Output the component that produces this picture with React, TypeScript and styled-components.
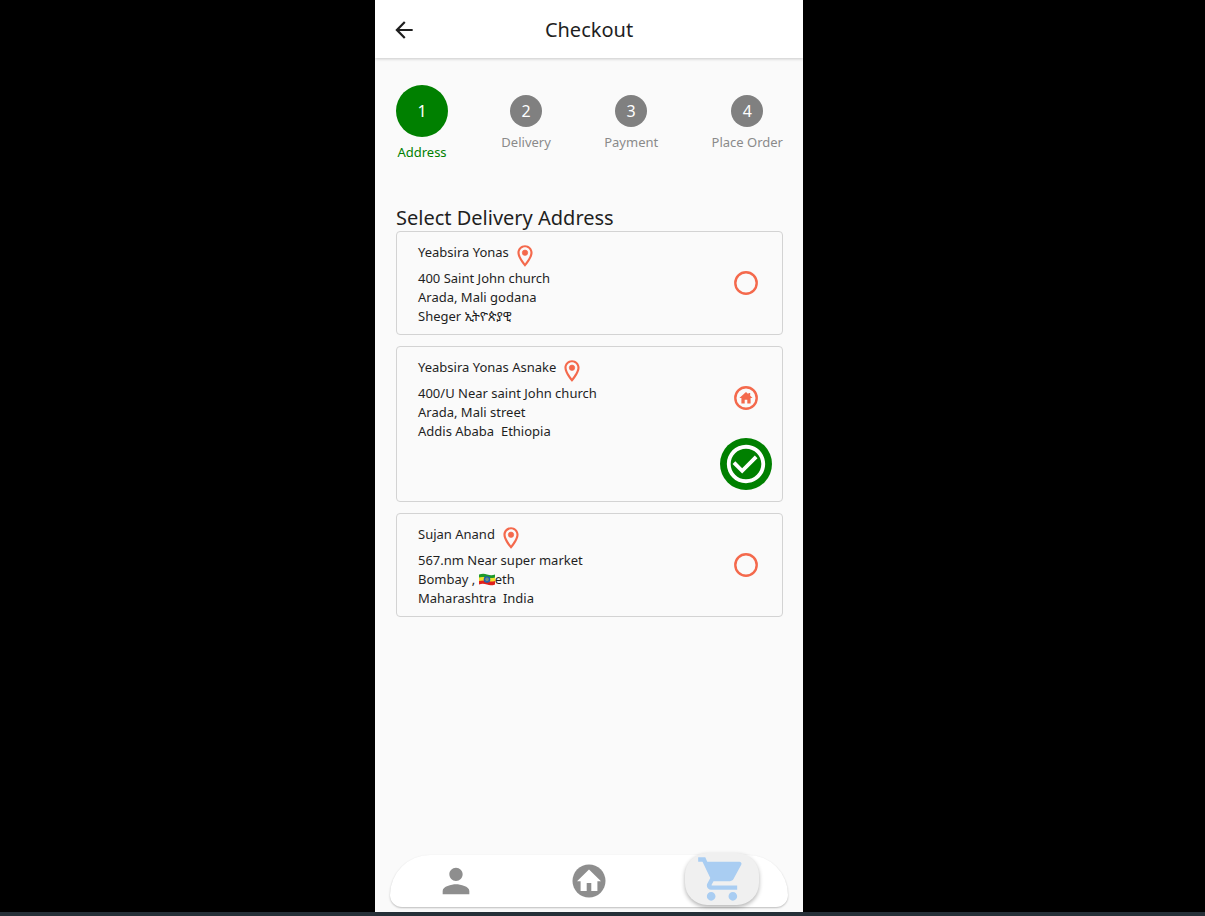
import React from "react";
import styled, { createGlobalStyle } from "styled-components";
import {
  MdArrowBack,
  MdCheckCircleOutline,
  MdOutlineLocationOn,
  MdPerson,
  MdShoppingCart,
} from "react-icons/md";

const GlobalStyle = createGlobalStyle`
  *, *::before, *::after { box-sizing: border-box; }
  body {
    margin: 0;
    background: #000;
    color: #1f1f1f;
    font-family: "Noto Sans", "Noto Sans Ethiopic", sans-serif;
  }
  button, input { font: inherit; margin: 0; padding: 0; border: 0; background: none; cursor: pointer; }
  svg { display: block; flex: none; }
`;

const Page = styled.div`
  min-height: 100vh;
  display: flex;
  justify-content: center;
  padding-right: 27px;
  border-bottom: 4px solid #263038;
`;

const Screen = styled.div`
  width: 100%;
  max-width: 428px;
  display: flex;
  flex-direction: column;
  background: #fafafa;
`;

const Header = styled.header`
  display: grid;
  grid-template-columns: 26px 1fr 26px;
  align-items: center;
  height: 58px;
  padding: 2px 16px 0;
  background: #fff;
  box-shadow: 0 1px 3px rgba(0, 0, 0, 0.2);
`;

const IconButton = styled.button`
  display: flex;
  align-items: center;
  justify-content: center;
  color: #1f1f1f;
`;

const Title = styled.h1`
  margin: 0;
  text-align: center;
  font-size: 20px;
  font-weight: 400;
  line-height: 28px;
`;

const Main = styled.main`
  flex: 1;
  padding: 27px 20px 24px 21px;
`;

const Steps = styled.ol`
  display: flex;
  align-items: center;
  justify-content: space-between;
  margin: 0 0 42px;
  padding: 0;
  list-style: none;
`;

const Step = styled.li<{ $active?: boolean }>`
  display: flex;
  flex-direction: column;
  align-items: center;
  gap: 6px;
  font-size: 13px;
  line-height: 19px;
  color: ${(p) => (p.$active ? "#008000" : "#8a8a8a")};
`;

const StepNumber = styled.span<{ $active?: boolean }>`
  display: flex;
  align-items: center;
  justify-content: center;
  width: ${(p) => (p.$active ? 52 : 32)}px;
  height: ${(p) => (p.$active ? 52 : 32)}px;
  border-radius: 50%;
  background: ${(p) => (p.$active ? "#008000" : "#808080")};
  color: #fff;
  font-size: 16px;
`;

const SectionTitle = styled.h2`
  margin: 0;
  font-size: 20px;
  font-weight: 400;
  line-height: 27px;
`;

const AddressList = styled.div`
  display: flex;
  flex-direction: column;
  gap: 11px;
`;

const Card = styled.div`
  display: grid;
  grid-template-columns: 1fr 52px;
  padding: 11px 10px 8px 21px;
  border: 1px solid #d3d3d3;
  border-radius: 4px;
  font-size: 13px;
  line-height: 19px;
`;

const NameRow = styled.div`
  display: flex;
  gap: 3px;
`;

const Name = styled.label`
  cursor: pointer;
`;

const Pin = styled(MdOutlineLocationOn)`
  color: #f4694c;

  path:last-child,
  circle { stroke: currentColor; stroke-width: 0.6; }
`;

const AddressLine = styled.div`
  display: flex;
  align-items: center;
  white-space: pre;
`;

const Actions = styled.div`
  display: flex;
  flex-direction: column;
  align-items: center;
  gap: 28px;
  padding: 28px 0 3px;
`;

const RadioWrap = styled.span`
  display: grid;
  place-items: center;
  color: #f4694c;

  > * { grid-area: 1 / 1; }
  > svg { pointer-events: none; }
`;

const Radio = styled.input`
  appearance: none;
  width: 24px;
  height: 24px;
  border-radius: 50%;
`;

const ConfirmButton = styled.button`
  display: flex;
  align-items: center;
  justify-content: center;
  width: 52px;
  height: 52px;
  border-radius: 50%;
  background: #008000;
  color: #fff;
`;

const TabBar = styled.nav`
  display: grid;
  grid-template-columns: repeat(3, 1fr);
  align-items: center;
  justify-items: center;
  height: 52px;
  margin: 0 15px 5px;
  border-radius: 40px 40px 12px 12px;
  background: #fff;
  box-shadow: 0 1px 2px rgba(0, 0, 0, 0.25);
`;

const Tab = styled.button<{ $current?: boolean }>`
  display: flex;
  align-items: center;
  justify-content: center;
  width: 74px;
  height: 52px;
  border-radius: 22px;
  color: ${(p) => (p.$current ? "#a9cdf2" : "#8e8e8e")};
  ${(p) =>
    p.$current &&
    "background: #f0f0f0; box-shadow: 0 2px 4px rgba(0, 0, 0, 0.3); transform: translateY(-2px);"}
`;

const RadioMark = ({ home }: { home?: boolean }) => (
  <svg width="24" height="24" viewBox="0 0 24 24" aria-hidden="true">
    <circle cx="12" cy="12" r="10.7" fill="none" stroke="currentColor" strokeWidth="2.4" />
    {home && (
      <path
        d="M12 6 L5.4 12 H7.4 V17.6 H10.7 V13.8 H13.3 V17.6 H16.6 V12 H18.6 L16.2 9.8 V7 H14.4 V8.200 Z"
        fill="currentColor"
      />
    )}
  </svg>
);

const HomeBadgeIcon = () => (
  <svg width="34" height="34" viewBox="0 0 34 34" aria-hidden="true">
    <circle cx="17" cy="17" r="16.5" fill="currentColor" />
    <path d="M17 5.5 L5 17.2 H8.6 V27 H14.7 V19 H19.3 V27 H25.4 V17.2 H29 Z" fill="#fff" />
  </svg>
);

const Flag = () => (
  <svg width="16" height="13" viewBox="0 0 16 13" role="img" aria-label="Flag of Ethiopia">
    <path d="M0 1.6 Q4 0 8 1.4 T16 1.6 V5 Q12 6.2 8 5 T0 5 Z" fill="#1e9a2c" />
    <path d="M0 4.6 Q4 3.4 8 4.6 T16 4.6 V8.4 Q12 9.6 8 8.4 T0 8.4 Z" fill="#f5e02a" />
    <path d="M0 8 Q4 6.8 8 8 T16 8 V11.4 Q12 13 8 11.6 T0 11.4 Z" fill="#e0201b" />
    <circle cx="8" cy="6.5" r="3.3" fill="#1c5fb0" />
    <path d="M8 4.4 L9.2 8.2 L6 5.9 H10 L6.8 8.2 Z" fill="none" stroke="#e8d44a" strokeWidth="0.3" />
  </svg>
);

interface Address {
  id: string;
  name: string;
  lines: React.ReactNode[];
  home?: boolean;
}

const addresses: Address[] = [
  {
    id: "sheger",
    name: "Yeabsira Yonas",
    lines: ["400 Saint John church", "Arada, Mali godana", "Sheger ኢትዮጵያዊ"],
  },
  {
    id: "addis",
    name: "Yeabsira Yonas Asnake",
    lines: ["400/U Near saint John church", "Arada, Mali street", "Addis Ababa  Ethiopia"],
    home: true,
  },
  {
    id: "bombay",
    name: "Sujan Anand",
    lines: ["567.nm Near super market", <>Bombay , <Flag />eth</>, "Maharashtra  India"],
  },
];

const steps = ["Address", "Delivery", "Payment", "Place Order"];

export default function App() {
  return (
    <Page>
      <GlobalStyle />
      <Screen>
        <Header>
          <IconButton type="button" aria-label="Back">
            <MdArrowBack size={26} />
          </IconButton>
          <Title>Checkout</Title>
        </Header>
        <Main>
          <Steps>
            {steps.map((step, i) => (
              <Step key={step} $active={i === 0}>
                <StepNumber $active={i === 0}>{i + 1}</StepNumber>
                {step}
              </Step>
            ))}
          </Steps>
          <SectionTitle>Select Delivery Address</SectionTitle>
          <AddressList>
            {addresses.map((a) => (
              <Card key={a.id}>
                <div>
                  <NameRow>
                    <Name htmlFor={a.id}>{a.name}</Name>
                    <Pin size={26} />
                  </NameRow>
                  {a.lines.map((line, i) => (
                    <AddressLine key={i}>{line}</AddressLine>
                  ))}
                </div>
                <Actions>
                  <RadioWrap>
                    <Radio type="radio" name="address" id={a.id} defaultChecked={a.home} />
                    <RadioMark home={a.home} />
                  </RadioWrap>
                  {a.home && (
                    <ConfirmButton type="button" aria-label="Deliver to this address">
                      <MdCheckCircleOutline size={46} />
                    </ConfirmButton>
                  )}
                </Actions>
              </Card>
            ))}
          </AddressList>
        </Main>
        <TabBar aria-label="Main">
          <Tab type="button" aria-label="Profile">
            <MdPerson size={40} />
          </Tab>
          <Tab type="button" aria-label="Home">
            <HomeBadgeIcon />
          </Tab>
          <Tab type="button" aria-label="Cart" $current>
            <MdShoppingCart size={52} />
          </Tab>
        </TabBar>
      </Screen>
    </Page>
  );
}
